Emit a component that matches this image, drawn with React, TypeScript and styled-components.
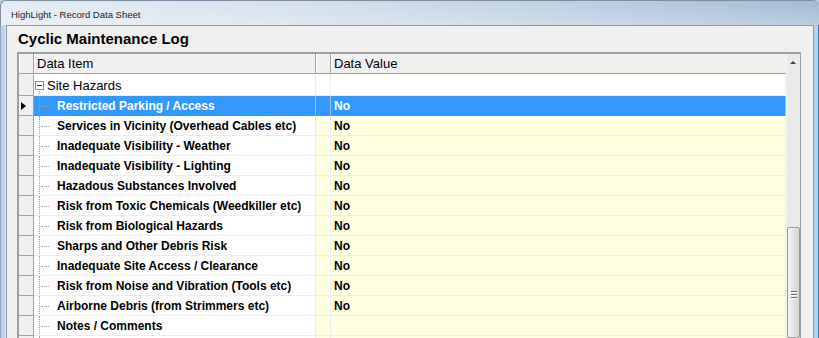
import React from "react";
import styled, { createGlobalStyle } from "styled-components";

const Global = createGlobalStyle`
  html, body { margin: 0; padding: 0; background: #ffffff; }
  body { font-family: "Liberation Sans", Arial, sans-serif; }
  * { box-sizing: border-box; }
`;

const Window = styled.div`
  width: 819px;
  height: 338px;
  overflow: hidden;
  display: flex;
  flex-direction: column;
  background: #b9cfe6;
`;

const TitleBar = styled.div`
  height: 25px;
  flex: 0 0 25px;
  display: flex;
  align-items: center;
  padding-left: 10px;
  border-top: 1px solid #7d8fa3;
  border-left: 1px solid #7d8fa3;
  border-top-left-radius: 6px;
  border-top-right-radius: 6px;
  background:
    linear-gradient(to bottom, rgba(255,255,255,0) 0%, rgba(255,255,255,0.25) 100%),
    linear-gradient(to right, #e4ebf2 0%, #d6e1ec 35%, #bccfe2 70%, #a3bbd5 100%);
`;

const TitleText = styled.span`
  font-family: "Liberation Sans", Arial, sans-serif;
  font-size: 9.5px;
  color: #222;
  padding-top: 2px;
`;

const Frame = styled.div`
  flex: 1;
  display: flex;
  min-height: 0;
`;

const SideFrame = styled.div<{ $side: "left" | "right" }>`
  flex: 0 0 ${(p) => (p.$side === "left" ? 7 : 6)}px;
  background: ${(p) =>
    p.$side === "left"
      ? "linear-gradient(to right, #8da6c2 0 1px, #bdd2e8 1px 5px, #dde7f1 5px 6px, #8e9aa7 6px 7px)"
      : "linear-gradient(to right, #8e9aa7 0 1px, #b7cee7 1px 5px, #3d7eae 5px 6px)"};
`;

const Client = styled.div`
  flex: 1;
  min-height: 0;
  background: #f0f0f0;
  border-top: 1px solid #8e9aa7;
  padding: 4px 0 0 10px;
  display: flex;
  flex-direction: column;
`;

const Heading = styled.div`
  font-family: "Liberation Sans", Arial, sans-serif;
  font-weight: bold;
  font-size: 15px;
  line-height: 17px;
  color: #000;
  margin-left: 1px;
  height: 22px;
  flex: 0 0 22px;
`;

const GridBox = styled.div`
  width: 784px;
  flex: 1;
  min-height: 0;
  overflow: hidden;
  display: flex;
  border-top: 2px solid #a0a0a0;
  border-left: 2px solid #a0a0a0;
  border-right: 1px solid #a0a0a0;
  background: #ffffff;
`;

const GridMain = styled.div`
  flex: 0 0 767px;
  display: flex;
  flex-direction: column;
`;

const HeaderRow = styled.div`
  display: flex;
  height: 20px;
  flex: 0 0 20px;
  background: #f0f0f0;
  border-bottom: 1px solid #a0a0a0;
`;

const HeaderCell = styled.div<{ $w: number }>`
  flex: 0 0 ${(p) => p.$w}px;
  border-right: 1px solid #a0a0a0;
  box-shadow: inset 1px 0 0 #ffffff;
  font-family: "Liberation Sans", Arial, sans-serif;
  font-size: 13px;
  color: #000;
  display: flex;
  align-items: center;
  padding-left: 3px;
  &:last-child { border-right: none; }
`;

const Spacer = styled.div`
  height: 1px;
  flex: 0 0 1px;
  display: flex;
`;

const SpacerPart = styled.div<{ $w: number; $bg: string }>`
  flex: 0 0 ${(p) => p.$w}px;
  background: ${(p) => p.$bg};
`;

const Row = styled.div<{ $h: number }>`
  display: flex;
  height: ${(p) => p.$h}px;
  flex: 0 0 ${(p) => p.$h}px;
`;

const RowHeader = styled.div`
  flex: 0 0 15px;
  background: #f0f0f0;
  border-right: 1px solid #a0a0a0;
  border-bottom: 1px solid #a0a0a0;
  display: flex;
  align-items: center;
  padding-left: 2px;
`;

const Pointer = styled.div`
  width: 0;
  height: 0;
  border-top: 4px solid transparent;
  border-bottom: 4px solid transparent;
  border-left: 5px solid #000;
`;

const Cell = styled.div<{ $w: number; $bg: string; $sel?: boolean }>`
  flex: 0 0 ${(p) => p.$w}px;
  background: ${(p) => p.$bg};
  border-right: 1px solid ${(p) => (p.$sel ? "#8cc2f8" : "#ececec")};
  border-bottom: 1px solid ${(p) => (p.$sel ? "#3399ff" : "#ececec")};
  display: flex;
  align-items: center;
  position: relative;
  overflow: hidden;
  white-space: nowrap;
  font-family: "Liberation Sans", Arial, sans-serif;
  font-size: 12px;
  font-weight: bold;
  color: ${(p) => (p.$sel ? "#ffffff" : "#000000")};
`;

const Gutter = styled.div`
  flex: 0 0 23px;
  align-self: stretch;
  position: relative;
  margin-bottom: -1px;
  &::before {
    content: "";
    position: absolute;
    left: 5px;
    top: 0;
    bottom: 0;
    border-left: 1px dotted #a0a0a0;
  }
  &::after {
    content: "";
    position: absolute;
    left: 7px;
    width: 8px;
    top: 50%;
    border-top: 1px dotted #a0a0a0;
  }
`;

const ExpandBox = styled.div`
  flex: 0 0 9px;
  width: 9px;
  height: 9px;
  margin-left: 1px;
  border: 1px solid #919191;
  background: #fff;
  position: relative;
  &::after {
    content: "";
    position: absolute;
    left: 1px;
    right: 1px;
    top: 3px;
    border-top: 1px solid #333;
  }
`;

const CategoryLine = styled.div`
  position: absolute;
  left: 5px;
  top: 16px;
  bottom: -1px;
  border-left: 1px dotted #a0a0a0;
`;

const CategoryText = styled.span`
  font-weight: normal;
  font-size: 13px;
  margin-left: 3px;
`;

const ValueText = styled.span`
  padding-left: 3px;
`;

const ScrollBar = styled.div`
  flex: 0 0 14px;
  display: flex;
  flex-direction: column;
  background: #eaeaea;
  border-left: 1px solid #f4f4f4;
`;

const UpButton = styled.div`
  flex: 0 0 17px;
  display: flex;
  justify-content: center;
  align-items: center;
  padding-right: 1px;
`;

const UpArrow = styled.div`
  width: 0;
  height: 0;
  border-left: 3px solid transparent;
  border-right: 3px solid transparent;
  border-bottom: 3px solid #404040;
`;

const Track = styled.div`
  flex: 0 0 156px;
`;

const Thumb = styled.div`
  flex: 1;
  border: 1px solid #9a9a9a;
  border-radius: 2px;
  background: linear-gradient(to right, #f3f3f3 0%, #e6e6e6 45%, #d4d4d4 100%);
  display: flex;
  flex-direction: column;
  align-items: center;
  padding-top: 63px;
  gap: 2px;
`;

const Grip = styled.div`
  width: 6px;
  height: 1px;
  background: #6a6a6a;
  box-shadow: 0 1px 0 #ffffff;
`;

const ITEM_W = 282;
const NARROW_W = 15;
const VALUE_W = 455;
const YELLOW = "#ffffe1";
const BLUE = "#3399ff";

type Item = { label: string; value: string };

const items: Item[] = [
  { label: "Restricted Parking / Access", value: "No" },
  { label: "Services in Vicinity (Overhead Cables etc)", value: "No" },
  { label: "Inadequate Visibility - Weather", value: "No" },
  { label: "Inadequate Visibility - Lighting", value: "No" },
  { label: "Hazadous Substances Involved", value: "No" },
  { label: "Risk from Toxic Chemicals (Weedkiller etc)", value: "No" },
  { label: "Risk from Biological Hazards", value: "No" },
  { label: "Sharps and Other Debris Risk", value: "No" },
  { label: "Inadequate Site Access / Clearance", value: "No" },
  { label: "Risk from Noise and Vibration (Tools etc)", value: "No" },
  { label: "Airborne Debris (from Strimmers etc)", value: "No" },
  { label: "Notes / Comments", value: "" },
  { label: "", value: "" },
];

export default function App() {
  return (
    <>
      <Global />
      <Window>
        <TitleBar>
          <TitleText>HighLight - Record Data Sheet</TitleText>
        </TitleBar>
        <Frame>
          <SideFrame $side="left" />
          <Client>
            <Heading>Cyclic Maintenance Log</Heading>
            <GridBox>
              <GridMain>
                <HeaderRow>
                  <HeaderCell $w={15} />
                  <HeaderCell $w={ITEM_W}>Data Item</HeaderCell>
                  <HeaderCell $w={NARROW_W} />
                  <HeaderCell $w={VALUE_W}>Data Value</HeaderCell>
                </HeaderRow>
                <Spacer>
                  <SpacerPart $w={15} $bg="#f0f0f0" />
                  <SpacerPart $w={ITEM_W} $bg="#ffffff" />
                  <SpacerPart $w={NARROW_W + VALUE_W} $bg="#fbfbe6" />
                </Spacer>
                <Row $h={21}>
                  <RowHeader />
                  <Cell $w={ITEM_W} $bg="#ffffff">
                    <ExpandBox />
                    <CategoryLine />
                    <CategoryText>Site Hazards</CategoryText>
                  </Cell>
                  <Cell $w={NARROW_W} $bg="#ffffff" />
                  <Cell $w={VALUE_W} $bg="#ffffff" />
                </Row>
                {items.map((it, i) => {
                  const sel = i === 0;
                  return (
                    <Row $h={20} key={i}>
                      <RowHeader>{sel && <Pointer />}</RowHeader>
                      <Cell $w={ITEM_W} $bg={sel ? BLUE : "#ffffff"} $sel={sel}>
                        <Gutter />
                        {it.label}
                      </Cell>
                      <Cell $w={NARROW_W} $bg={sel ? BLUE : YELLOW} $sel={sel} />
                      <Cell $w={VALUE_W} $bg={sel ? BLUE : YELLOW} $sel={sel}>
                        <ValueText>{it.value}</ValueText>
                      </Cell>
                    </Row>
                  );
                })}
              </GridMain>
              <ScrollBar>
                <UpButton>
                  <UpArrow />
                </UpButton>
                <Track />
                <Thumb>
                  <Grip />
                  <Grip />
                  <Grip />
                </Thumb>
              </ScrollBar>
            </GridBox>
          </Client>
          <SideFrame $side="right" />
        </Frame>
      </Window>
    </>
  );
}
